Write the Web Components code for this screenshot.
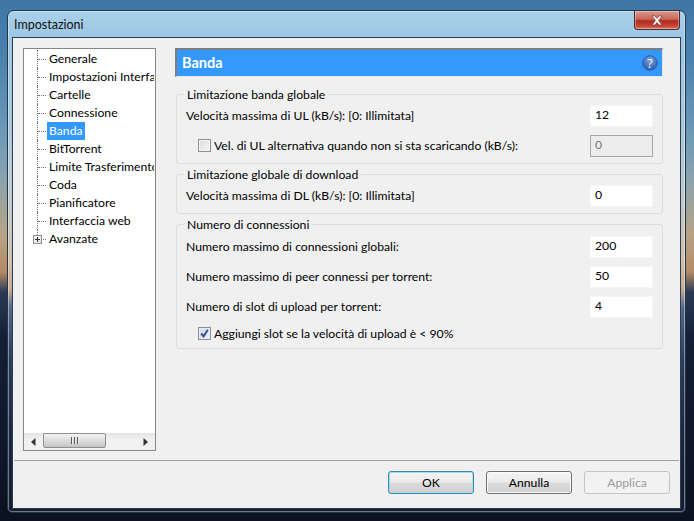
<!DOCTYPE html>
<html lang="it"><head><meta charset="utf-8"><title>Impostazioni</title>
<style>
html,body{margin:0;padding:0;height:100%}
body{font:12.2px "Lato","Open Sans",sans-serif;color:#000;overflow:hidden}
</style></head><body>
<desktop-bg>
<aero-window title="Impostazioni">
  <pref-tree slot="nav">
    <tree-item>Generale</tree-item>
    <tree-item>Impostazioni Interfaccia</tree-item>
    <tree-item>Cartelle</tree-item>
    <tree-item>Connessione</tree-item>
    <tree-item selected>Banda</tree-item>
    <tree-item>BitTorrent</tree-item>
    <tree-item>Limite Trasferimento</tree-item>
    <tree-item>Coda</tree-item>
    <tree-item>Pianificatore</tree-item>
    <tree-item>Interfaccia web</tree-item>
    <tree-item last expandable>Avanzate</tree-item>
  </pref-tree>
  <pref-header slot="main">Banda</pref-header>
  <group-box slot="main" label="Limitazione banda globale" style="height:78px;margin-top:9px">
    <field-row value="12">Velocità massima di UL (kB/s): [0: Illimitata]</field-row>
    <field-row value="0" disabled check>Vel. di UL alternativa quando non si sta scaricando (kB/s):</field-row>
  </group-box>
  <group-box slot="main" label="Limitazione globale di download" style="height:48px;margin-top:2px">
    <field-row value="0">Velocità massima di DL (kB/s): [0: Illimitata]</field-row>
  </group-box>
  <group-box slot="main" label="Numero di connessioni" style="height:133px;margin-top:2px;--rows-top:4px">
    <field-row value="200">Numero massimo di connessioni globali:</field-row>
    <field-row value="50">Numero massimo di peer connessi per torrent:</field-row>
    <field-row value="4">Numero di slot di upload per torrent:</field-row>
    <field-row check checked short>Aggiungi slot se la velocità di upload è &lt; 90%</field-row>
  </group-box>
  <dlg-button slot="actions" default>OK</dlg-button>
  <dlg-button slot="actions">Annulla</dlg-button>
  <dlg-button slot="actions" disabled>Applica</dlg-button>
</aero-window>
</desktop-bg>
<script>
function def(name, css, html, init){
  customElements.define(name, class extends HTMLElement{
    connectedCallback(){
      if(this.shadowRoot) return;
      const r=this.attachShadow({mode:'open'});
      r.innerHTML='<style>'+css+'</style>'+(typeof html==='function'?html(this):html);
      if(init) init(this,r);
    }
  });
}
def('desktop-bg',`
:host{display:flex;width:694px;height:521px;box-sizing:border-box;padding:10px 8px 8px 7px;
background:linear-gradient(180deg,#3d76a6 0,#4c82ad 60px,#6c98b6 130px,#8ba3ad 180px,#b8a285 235px,#b58a66 272px,#2a3a55 292px,#141e35 340px,#0b1220 521px)}
`,'<slot></slot>');
def('aero-window',`
:host{display:flex;flex-direction:column;flex:1;box-sizing:border-box;border:1px solid #22364a;border-radius:7px 7px 5px 5px;
padding:0 5px 4px 5px;background:linear-gradient(180deg,#a9d0ea 0,#9cc6e2 28px,#a9c8dc 120px,#bfccd2 180px,#d2bfa8 250px,#c9ab92 278px,#56688a 296px,#2b3d5d 350px,#1a2640 430px,#141d30 100%);
box-shadow:inset 0 0 0 1px rgba(255,255,255,.4)}
.bar{display:flex;height:27px;justify-content:space-between;align-items:flex-start;flex:none}
.t{font-size:12.5px;padding:5px 0 0 1px;line-height:18px;color:#111}
.x{width:46px;height:19px;box-sizing:border-box;border:1px solid #4a2a2a;border-top:0;border-radius:0 0 4px 4px;display:flex;align-items:center;justify-content:center;
background:linear-gradient(180deg,#d99a8e 0,#c8665a 45%,#b0281c 55%,#c8483a 85%,#d9806f 100%);box-shadow:inset 0 0 0 1px rgba(255,255,255,.35)}
.client{flex:1;display:flex;flex-direction:column;background:#f0f0f0;border:1px solid #eef2f6;box-sizing:border-box;min-height:0;box-shadow:0 0 0 1px #2c3d52}
.top{flex:1;display:flex;padding:9px 16px 9px 9px;min-height:0}
.main{flex:1;display:flex;flex-direction:column;margin-left:19px;min-width:0}
.foot{flex:none;height:47px;border-top:1px solid #a0a0a0;box-sizing:border-box;display:flex;justify-content:flex-end;gap:12px;padding:10px 9px 0 0}
`,h=>`<div class="bar"><span class="t">${h.getAttribute('title')}</span><span class="x"><svg width="14" height="11" viewBox="0 0 14 11"><path d="M2 1h3l2 2.4L9 1h3L8.6 5.5 12 10H9L7 7.5 5 10H2l3.4-4.5z" fill="#fff" stroke="#6d2018" stroke-width=".6"/></svg></span></div>
<div class="client"><div class="top"><slot name="nav"></slot><div class="main"><slot name="main"></slot></div></div><div class="foot"><slot name="actions"></slot></div></div>`);
def('pref-tree',`
:host{display:flex;flex-direction:column;width:133px;flex:none;box-sizing:border-box;border:1px solid #828790;background:#fff}
.list{flex:1;overflow:hidden;padding-top:1px;min-height:0}
.sb{flex:none;height:17px;display:flex;align-items:center;background:linear-gradient(180deg,#e4e4e4,#f2f2f2 40%,#f0f0f0)}
.a{width:19px;display:flex;justify-content:center;flex:none}
.th{width:63px;height:15px;margin-top:-2px;box-sizing:border-box;border:1px solid #8f8f8f;border-radius:2px;background:linear-gradient(180deg,#f2f2f2,#dcdcdc 50%,#c4c4c4);display:flex;align-items:center;justify-content:center;gap:1px}
.th i{width:1px;height:7px;background:#555;border-right:1px solid #eee}
.sp{flex:1}
`,`<div class="list"><slot></slot></div><div class="sb"><span class="a"><svg width="5" height="8"><path d="M4.5 0v8L0 4z" fill="#333"/></svg></span><span class="th"><i></i><i></i><i></i></span><span class="sp"></span><span class="a"><svg width="5" height="8"><path d="M.5 0v8L5 4z" fill="#333"/></svg></span></div>`);
def('tree-item',`
:host{display:flex;height:18px;align-items:stretch;white-space:nowrap;overflow:hidden;margin-right:1px}
.g{width:23px;flex:none;position:relative;box-sizing:border-box;margin-left:-1px}
.v{position:absolute;left:14px;top:0;bottom:0;border-left:1px dotted #777}
.h{position:absolute;left:15px;right:0;top:9px;border-top:1px dotted #777}
:host([last]) .v{bottom:9px}
.box{position:absolute;left:10px;top:5px;width:9px;height:9px;box-sizing:border-box;border:1px solid #8e8f8f;background:linear-gradient(135deg,#fff,#e0e0e0)}
.box:before{content:"";position:absolute;left:1px;right:1px;top:3px;height:1px;background:#333}
.box:after{content:"";position:absolute;top:1px;bottom:1px;left:3px;width:1px;background:#333}
.l{padding:0 2px;line-height:18px;margin-left:1px;box-sizing:border-box}
:host([selected]) .l{background:#3399ff;color:#fff}
`,h=>`<span class="g"><span class="v"></span><span class="h"></span>${h.hasAttribute('expandable')?'<span class="box"></span>':''}</span><span class="l"><slot></slot></span>`);
def('pref-header',`
:host{display:flex;align-items:center;justify-content:space-between;flex:none;height:29px;box-sizing:border-box;background:#3399ff;border-top:2px solid #7d7d7d;border-left:2px solid #7d7d7d;border-right:1px solid #e6e6e6;border-bottom:1px solid #e6e6e6;padding:0 4px 0 5px;color:#fff;font-weight:700;font-size:14.5px}
svg{display:block}
.n{padding-bottom:2px}
`,`<span class="n"><slot></slot></span><svg width="16" height="16" viewBox="0 0 16 16" role="img" aria-label="Guida"><defs><radialGradient id="g" cx=".5" cy=".3" r=".8"><stop offset="0" stop-color="#7aa4e0"/><stop offset="1" stop-color="#1d4f9e"/></radialGradient></defs><circle cx="8" cy="8" r="7.3" fill="url(#g)" stroke="#2a5fb0"/><text x="8" y="12.5" text-anchor="middle" font-family="Open Sans,sans-serif" font-weight="400" font-size="12.5" fill="#fff">?</text></svg>`);
def('group-box',`
:host{display:block;flex:none;box-sizing:border-box;margin:8px 0 0 1px;position:relative}
fieldset{margin:0;padding:0 9px 0 9px;border:1px solid #dcdcdc;border-radius:3px;height:100%;box-sizing:border-box;min-width:0;display:block}
legend{padding:1px 3px 0;margin-left:-2px;line-height:15px}
.rows{display:flex;flex-direction:column;margin-top:var(--rows-top,3px);gap:8px}
`,h=>`<fieldset><legend>${h.getAttribute('label')}</legend><div class="rows"><slot></slot></div></fieldset>`);
def('field-row',`
:host{display:flex;align-items:center;justify-content:space-between;height:22px;white-space:nowrap}
:host([short]){height:18px;margin-top:-1px}
.lab{display:flex;align-items:center;padding-bottom:2px}
:host([check]) .lab{padding-left:12px}
.c{width:13px;height:13px;box-sizing:border-box;border:1px solid #8e8f8f;margin-right:3px;background:linear-gradient(135deg,#dcdcdc,#f6f6f6);display:block;box-shadow:inset 0 0 0 1px #f4f4f4}
.c.on{background:linear-gradient(135deg,#cdd8ea,#eef2f8);box-shadow:inset 0 0 0 1px #e4ecf8}
.c svg{display:block}
.i{width:63px;height:22px;box-sizing:border-box;background:#fff;border:1px solid #f6f6f6;padding:0 4px;line-height:18px;color:#000;flex:none}
:host([disabled]) .i{background:#ededed;border:1px solid #a8a8a8;color:#777}
`,h=>{
  const c=h.hasAttribute('check'),on=h.hasAttribute('checked'),v=h.getAttribute('value');
  return `<span class="lab">${c?`<span class="c ${on?'on':''}">${on?'<svg width="11" height="11" viewBox="0 0 11 11"><path d="M2.2 5.5l2.4 2.8L8.8 1.8" fill="none" stroke="#36508c" stroke-width="2"/></svg>':''}</span>`:''}<span><slot></slot></span></span>${v!==null?`<span class="i">${v}</span>`:''}`;
});
def('dlg-button',`
:host{display:flex;align-items:center;justify-content:center;width:86px;height:23px;box-sizing:border-box;border:1px solid #707070;border-radius:3px;background:linear-gradient(180deg,#f4f4f4 0,#ebebeb 48%,#dcdcdc 52%,#cfcfcf 100%);box-shadow:inset 0 0 0 1px #fbfbfb}
:host([default]){border-color:#3a87ad;box-shadow:inset 0 0 0 1px #a6dcf2}
:host([disabled]){border-color:#c4c4c4;background:#f2f2f2;color:#9a9a9a;box-shadow:none}
`,'<slot></slot>');
</script>
</body></html>
